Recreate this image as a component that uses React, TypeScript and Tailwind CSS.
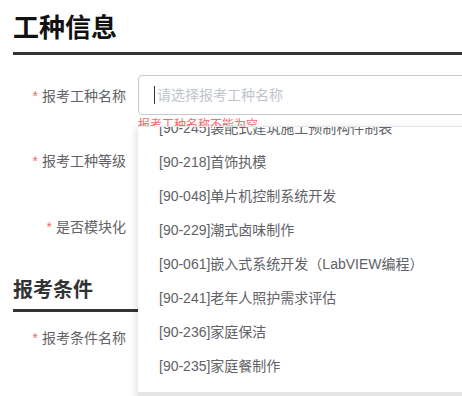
const jobOptions = [
  "[90-245]装配式建筑施工预制构件制表",
  "[90-218]首饰执模",
  "[90-048]单片机控制系统开发",
  "[90-229]潮式卤味制作",
  "[90-061]嵌入式系统开发（LabVIEW编程）",
  "[90-241]老年人照护需求评估",
  "[90-236]家庭保洁",
  "[90-235]家庭餐制作",
  "[90-233]家庭收纳整理",
];

function FormLabel({ text }: { text: string }) {
  return (
    <div className="flex h-10 w-[113px] shrink-0 items-center justify-end pt-[3px] text-[14px] text-[#606266]">
      <span className="mr-[4px] text-[#f56c6c]">*</span>
      {text}
    </div>
  );
}

export default function App() {
  return (
    <div
      className="relative h-[396px] w-[462px] overflow-hidden bg-white"
      style={{ fontFamily: '"Liberation Sans", "Noto Sans CJK SC", sans-serif' }}
    >
      <div className="pl-[13px] pt-[10px]">
        <h1 className="border-b-[3px] border-[#333333] pb-[6px] text-[26px] font-bold leading-[36px] text-[#111111]">
          工种信息
        </h1>

        <div className="mt-[20px] flex items-start">
          <FormLabel text="报考工种名称" />
          <div className="ml-[12px] flex-1">
            <div className="flex h-[40px] w-[340px] items-center rounded-[4px] border border-[#c8c9cc] pl-[15px]">
              <span className="mr-[2px] h-[18px] w-px bg-[#333]" />
              <span className="text-[14px] text-[#c0c4cc]">请选择报考工种名称</span>
            </div>
            <div className="mt-[3px] text-[12px] leading-[14px] text-[#f56c6c]">
              报考工种名称不能为空
            </div>
          </div>
        </div>

        <div className="mt-[8px] flex">
          <FormLabel text="报考工种等级" />
        </div>

        <div className="mt-[26px] flex">
          <FormLabel text="是否模块化" />
        </div>

        <h2 className="mt-[30px] w-[125px] border-b-[3px] border-[#333333] pb-[5px] text-[20px] font-bold leading-[28px] text-[#333333]">
          报考条件
        </h2>

        <div className="mt-[5px] flex">
          <FormLabel text="报考条件名称" />
        </div>
      </div>

      <div className="absolute left-[138px] top-[126px] w-[340px] shadow-[-2px_2px_8px_rgba(0,0,0,0.12)]">
        <div className="h-[266px] overflow-hidden border-t border-[#e4e7ed] bg-white">
          <ul className="-mt-[16px]">
            {jobOptions.map((opt) => (
              <li
                key={opt}
                className="flex h-[34px] items-center whitespace-nowrap pl-[21px] text-[14px] text-[#606266]"
              >
                {opt}
              </li>
            ))}
          </ul>
        </div>
        <div className="h-[6px] bg-[#e5e5e5]" />
      </div>
    </div>
  );
}
